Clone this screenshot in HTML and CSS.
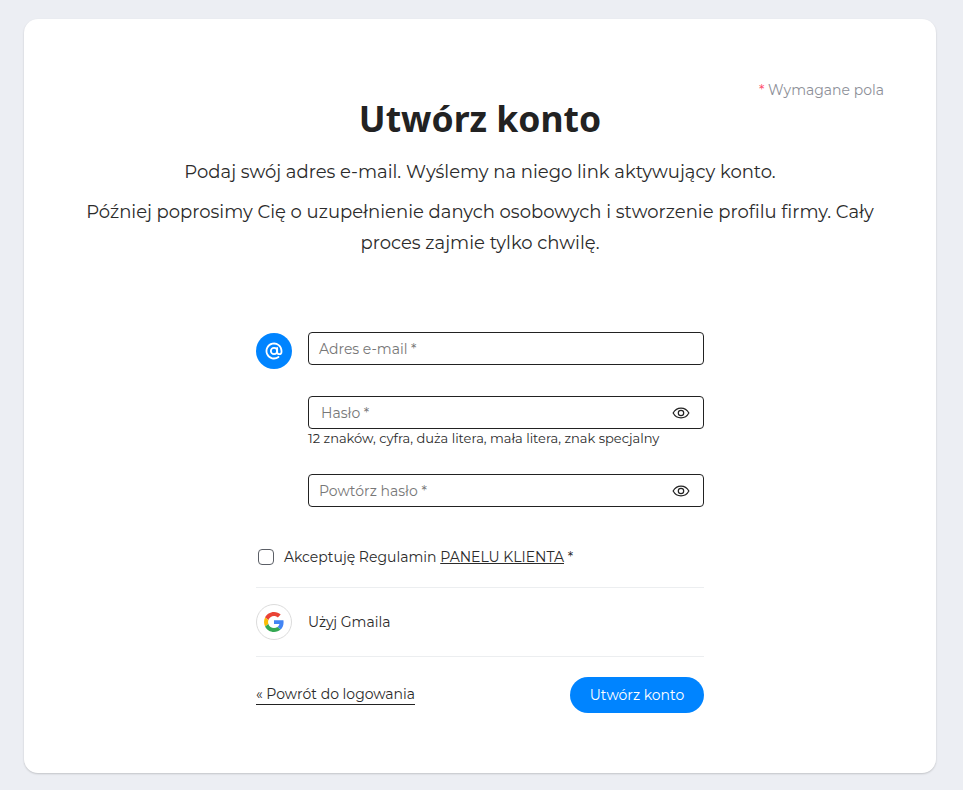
FILE: index.html
```html
<!DOCTYPE html>
<html lang="pl">
<head>
<meta charset="utf-8">
<title>Utwórz konto</title>
<link rel="stylesheet" href="styles.css">
</head>
<body>
<main class="card">
  <p class="required"><span class="star">*</span> Wymagane pola</p>
  <h1 class="title">Utwórz konto</h1>
  <p class="lead lead-first">Podaj swój adres e-mail. Wyślemy na niego link aktywujący konto.</p>
  <p class="lead">Później poprosimy Cię o uzupełnienie danych osobowych i stworzenie profilu firmy. Cały proces zajmie tylko chwilę.</p>
  <form class="form">
    <div class="row row-email">
      <span class="badge">
        <svg width="18" height="18" viewBox="0 0 24 24" fill="none" stroke="#fff" stroke-width="2.400" stroke-linecap="round"><circle cx="12" cy="12" r="4.200"/><path d="M16.200 8v5.200a2.900 2.900 0 0 0 5.800 0V12a10 10 0 1 0-4 8"/></svg>
      </span>
      <div class="field"><span class="ph">Adres e-mail *</span></div>
    </div>
    <div class="row row-pass">
      <span class="spacer"></span>
      <div class="stack">
        <div class="field field-eye"><span class="ph ph-shift">Hasło *</span>
          <svg class="eye" width="18" height="18" viewBox="0 0 24 24" fill="none" stroke="#222" stroke-width="1.600"><path d="M1.500 12C4 7.500 7.500 5.500 12 5.500s8 2 10.500 6.500C20 16.500 16.500 18.500 12 18.500S4 16.500 1.500 12z"/><circle cx="12" cy="12" r="3.600"/></svg>
        </div>
        <p class="hint">12 znaków, cyfra, duża litera, mała litera, znak specjalny</p>
      </div>
    </div>
    <div class="row row-repeat">
      <span class="spacer"></span>
      <div class="field field-eye"><span class="ph">Powtórz hasło *</span>
        <svg class="eye" width="18" height="18" viewBox="0 0 24 24" fill="none" stroke="#222" stroke-width="1.600"><path d="M1.500 12C4 7.500 7.500 5.500 12 5.500s8 2 10.500 6.500C20 16.500 16.500 18.500 12 18.500S4 16.500 1.500 12z"/><circle cx="12" cy="12" r="3.600"/></svg>
      </div>
    </div>
    <div class="terms">
      <span class="check"></span>
      <span class="terms-text">Akceptuję Regulamin <a class="terms-link" href="#">PANELU KLIENTA</a> *</span>
    </div>
    <div class="gmail">
      <span class="g-circle">
        <svg width="20" height="20" viewBox="0 0 48 48"><path fill="#EA4335" d="M24 9.500c3.540 0 6.710 1.220 9.210 3.600l6.850-6.850C35.900 2.380 30.470 0 24 0 14.620 0 6.510 5.380 2.560 13.220l7.980 6.190C12.430 13.720 17.740 9.500 24 9.500z"/><path fill="#4285F4" d="M46.980 24.550c0-1.570-.15-3.090-.38-4.550H24v9.020h12.940c-.58 2.960-2.260 5.480-4.780 7.180l7.730 6c4.510-4.180 7.090-10.360 7.090-17.650z"/><path fill="#FBBC05" d="M10.530 28.590c-.48-1.450-.76-2.990-.76-4.590s.27-3.140.76-4.590l-7.980-6.190C.92 16.460 0 20.120 0 24c0 3.880.92 7.540 2.560 10.780l7.970-6.190z"/><path fill="#34A853" d="M24 48c6.480 0 11.930-2.130 15.890-5.810l-7.730-6c-2.150 1.450-4.920 2.300-8.160 2.300-6.260 0-11.570-4.220-13.470-9.910l-7.980 6.190C6.510 42.620 14.620 48 24 48z"/></svg>
      </span>
      <span class="gmail-text">Użyj Gmaila</span>
    </div>
    <div class="actions">
      <a class="back" href="#">« Powrót do logowania</a>
      <button class="submit" type="button">Utwórz konto</button>
    </div>
  </form>
</main>
</body>
</html>
```
FILE: styles.css
```css
* { box-sizing: border-box; }
html, body { margin: 0; padding: 0; }
body {
  background: #eceef3;
  font-family: Montserrat, Inter, "Open Sans", sans-serif;
  color: #2b2b2b;
  padding: 19px 27px 17px 24px;
  min-height: 790px;
}
.card {
  background: #fff;
  border-radius: 14px;
  box-shadow: 0 1px 2px rgba(0,0,0,.18);
  height: 754px;
  padding: 62px 52px 0;
}
.required {
  margin: 0;
  text-align: right;
  font-size: 14px;
  line-height: 18px;
  color: #8d8f98;
}
.star { color: #ff4d6d; }
.title {
  margin: 0;
  text-align: center;
  font-family: "Noto Sans", sans-serif;
  font-weight: 700;
  font-size: 35.500px;
  line-height: 38px;
  color: #222;
}
.lead {
  margin: 9px 0 0;
  text-align: center;
  font-size: 18px;
  line-height: 31px;
  color: #2b2b2b;
}
.lead-first { margin-top: 20px; }
.form {
  width: 448px;
  margin: 73px auto 0;
}
.row { display: flex; align-items: flex-start; gap: 16px; }
.spacer { width: 36px; flex: none; }
.stack { flex: 1; min-width: 0; }
.badge {
  width: 36px; height: 36px; flex: none;
  border-radius: 50%;
  background: #0084ff;
  display: flex; align-items: center; justify-content: center;
  margin-top: 1px;
}
.field {
  flex: 1; min-width: 0;
  height: 33px;
  border: 1px solid #222;
  border-radius: 4px;
  display: flex; align-items: center; justify-content: space-between;
  padding: 0 13px 0 10px;
  background: #fff;
}
.ph { font-size: 14px; color: #777; }
.ph-shift { margin-left: 2px; }
.eye { display: block; }
.row-pass { margin-top: 27px; }
.hint {
  margin: 1px 0 0;
  font-size: 13px;
  line-height: 16px;
  color: #2b2b2b;
}
.row-repeat { margin-top: 28px; }
.terms {
  display: flex; align-items: center;
  margin-top: 34px;
  height: 32px;
  padding-left: 2px;
}
.check {
  width: 16px; height: 16px;
  border: 1px solid #5b5f66;
  border-radius: 4px;
  margin-right: 10px;
  background: #fff;
}
.terms-text { font-size: 14px; color: #2b2b2b; }
.terms-link { color: #2b2b2b; text-decoration: underline; }
.gmail {
  display: flex; align-items: center; gap: 16px;
  margin-top: 14px;
  padding: 16px 0;
  border-top: 1px solid #eceef0;
  border-bottom: 1px solid #eceef0;
  height: 70px;
}
.g-circle {
  width: 36px; height: 36px; flex: none;
  border: 1px solid #dcdcdc;
  border-radius: 50%;
  display: flex; align-items: center; justify-content: center;
}
.gmail-text { font-size: 14px; color: #2b2b2b; }
.actions {
  display: flex; align-items: center; justify-content: space-between;
  margin-top: 20px;
}
.back {
  font-size: 14px;
  line-height: 18px;
  padding-bottom: 1px;
  color: #2b2b2b;
  text-decoration: none;
  border-bottom: 1px solid #222;
}
.submit {
  width: 134px; height: 36px;
  border: 0;
  border-radius: 18px;
  background: #0084ff;
  color: #fff;
  font-family: inherit;
  font-size: 14px;
  font-weight: 400;
}
```
